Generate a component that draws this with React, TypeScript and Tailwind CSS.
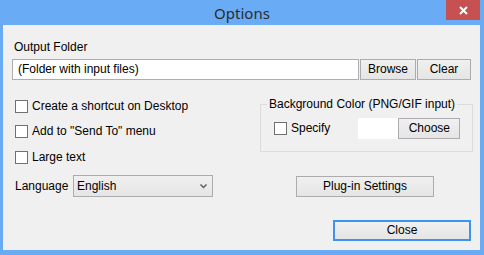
import React from 'react'

function Check({ label }: { label?: string }) {
    return (
        <div className="flex h-[13px] items-center">
            <div className="h-[13px] w-[13px] border border-[#707070] bg-white" />
            {label && <span className="ml-[4px] leading-[15px]">{label}</span>}
        </div>
    )
}

function Btn({ children, className }: { children: React.ReactNode; className: string }) {
    return (
        <div className={`flex items-center justify-center border border-[#acacac] bg-gradient-to-b from-[#f0f0f0] to-[#e5e5e5] leading-[15px] ${className}`}>
            {children}
        </div>
    )
}

export default function App() {
    return (
        <div className="flex h-[255px] w-[484px] flex-col bg-[#6aabf5] text-[12px] text-black" style={{ fontFamily: '"Liberation Sans", Arial, sans-serif' }}>
            {/* title bar */}
            <div className="relative flex h-[25px] items-center justify-center">
                <span className="text-[15px] leading-[20px] text-[#2b2b2b]" style={{ fontFamily: '"Noto Sans", sans-serif' }}>Options</span>
                <div className="absolute top-0 right-[4px] flex h-[20px] w-[34px] items-center justify-center bg-[#c75050]">
                    <svg width="9" height="9" viewBox="0 0 9 9">
                        <path d="M1 1L8 8M8 1L1 8" stroke="white" strokeWidth="2" />
                    </svg>
                </div>
            </div>

            {/* client area */}
            <div className="ml-[3px] flex h-[225px] w-[477px] flex-col bg-[#f0f0f0]">
                <div className="ml-[11px] mt-[15px] h-[15px] leading-[15px]">Output Folder</div>
                <div className="ml-[9px] mt-[4px] flex h-[21px]">
                    <div className="flex w-[347px] items-center border border-[#abadb3] bg-white pl-[5px] leading-[15px]">(Folder with input files)</div>
                    <Btn className="ml-[1px] w-[56px]">Browse</Btn>
                    <Btn className="ml-[1px] w-[54px]">Clear</Btn>
                </div>

                <div className="flex">
                    <div className="ml-[12px] flex w-[245px] flex-col">
                        <div className="mt-[20px]"><Check label="Create a shortcut on Desktop" /></div>
                        <div className="mt-[12px]"><Check label={'Add to "Send To" menu'} /></div>
                        <div className="mt-[13px]"><Check label="Large text" /></div>
                    </div>
                    <fieldset className="mt-[17px] h-[55px] w-[213px] min-w-0 border border-[#dcdcdc] px-[9px]">
                        <legend className="ml-[-3px] px-[2px] leading-[15px]">Background Color (PNG/GIF input)</legend>
                        <div className="ml-[4px] mt-[6px] flex h-[21px] items-center">
                            <Check label="Specify" />
                            <div className="ml-[28px] h-[21px] w-[40px] bg-white" />
                            <Btn className="h-[21px] w-[62px]">Choose</Btn>
                        </div>
                    </fieldset>
                </div>

                <div className="mt-[11px] flex">
                    <div className="ml-[12px] flex h-[22px] w-[58px] items-center leading-[15px]">Language</div>
                    <div className="flex h-[22px] w-[140px] items-center justify-between border border-[#acacac] bg-gradient-to-b from-[#f0f0f0] to-[#e5e5e5] pl-[3px] pr-[5px] leading-[15px]">
                        <span>English</span>
                        <svg width="7" height="5" viewBox="0 0 7 5">
                            <path d="M0.5 0.5L3.5 3.5L6.5 0.5" stroke="#606060" strokeWidth="1.5" fill="none" />
                        </svg>
                    </div>
                    <Btn className="ml-[83px] mt-[1px] h-[21px] w-[138px]">Plug-in Settings</Btn>
                </div>

                <div className="mt-[23px] flex justify-end pr-[9px]">
                    <Btn className="h-[21px] w-[138px] !border-2 !border-[#3c94ec]">Close</Btn>
                </div>
            </div>
        </div>
    )
}
